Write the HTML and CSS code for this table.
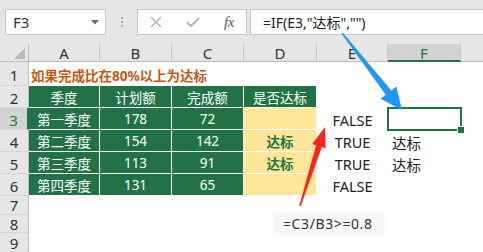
FILE: index.html
```html
<!DOCTYPE html>
<html lang="zh">
<head>
<meta charset="utf-8">
<link rel="stylesheet" href="styles.css">
</head>
<body>
<div class="app">
  <div class="fbar">
    <div class="namebox"><span>F3</span>
      <svg class="caret" width="8" height="5" viewBox="0 0 8 5"><path d="M0 0H8L4 4.5Z" fill="#6a6a6a"/></svg>
    </div>
    <div class="dots"><i></i><i></i><i></i></div>
    <div class="fxbox">
      <svg width="12" height="12" viewBox="0 0 12 12"><path d="M1 1L11 11M11 1L1 11" stroke="#b4b4b4" stroke-width="1.4" fill="none"/></svg>
      <svg width="14" height="10" viewBox="0 0 14 10"><path d="M1 5.5L5 9L13 1" stroke="#b4b4b4" stroke-width="2" fill="none"/></svg>
      <span class="fx">fx</span>
    </div>
    <div class="formula">=IF(E3,"达标","")</div>
  </div>
  <div class="sheet">
    <div class="corner"><i></i></div>
    <div class="ch">A</div><div class="ch">B</div><div class="ch">C</div><div class="ch">D</div><div class="ch">E</div><div class="ch sel">F</div><div class="ch end"></div>

    <div class="rh">1</div>
    <div class="title">如果完成比在80%以上为达标</div>

    <div class="rh">2</div>
    <div class="g">季度</div><div class="g">计划额</div><div class="g">完成额</div><div class="g">是否达标</div><div class="c"></div><div class="c"></div><div class="c"></div>

    <div class="rh sel">3</div>
    <div class="g">第一季度</div><div class="g">178</div><div class="g">72</div><div class="y"></div><div class="c e">FALSE</div><div class="c f active"></div><div class="c"></div>

    <div class="rh">4</div>
    <div class="g">第二季度</div><div class="g">154</div><div class="g">142</div><div class="y">达标</div><div class="c e">TRUE</div><div class="c f">达标</div><div class="c"></div>

    <div class="rh">5</div>
    <div class="g">第三季度</div><div class="g">113</div><div class="g">91</div><div class="y">达标</div><div class="c e">TRUE</div><div class="c f">达标</div><div class="c"></div>

    <div class="rh">6</div>
    <div class="g">第四季度</div><div class="g">131</div><div class="g">65</div><div class="y"></div><div class="c e">FALSE</div><div class="c"></div><div class="c"></div>

    <div class="rh small">7</div><div class="blank"></div>
    <div class="rh small">8</div><div class="blank"></div>
    <div class="rh small">9</div><div class="blank"></div>
  </div>
  <div class="note">=C3/B3&gt;=0.8</div>
  <svg class="arrows" width="483" height="252" viewBox="0 0 483 252">
    <polygon fill="#1d98f6" points="342.6,32.6 391.3,90.4 396.4,86.5 402,110 380.6,98.8 385.7,94.8 341.4,33.4"/>
    <polygon fill="#ff2218" points="300.7,206.2 321.8,147 325.6,148.2 325,127 312.3,144 316.1,145.2 299.3,205.8"/>
  </svg>
</div>
</body>
</html>
```

FILE: styles.css
```css
* { box-sizing: border-box; }
html, body { margin: 0; padding: 0; background: #fff; }
.app {
  position: relative;
  width: 483px;
  height: 252px;
  overflow: hidden;
  font-family: "Noto Sans", "Noto Sans CJK SC", sans-serif;
  color: #222;
}
.fbar {
  height: 44px;
  background: #e6e6e6;
  display: flex;
  align-items: flex-start;
  padding: 9px 0 0 5px;
}
.namebox {
  width: 101px;
  height: 26px;
  background: #fff;
  border: 1px solid #c6c6c6;
  display: flex;
  align-items: center;
  justify-content: space-between;
  padding: 0 6px 0 7px;
  font-size: 15px;
  color: #333;
}
.dots {
  width: 31px;
  height: 26px;
  display: flex;
  flex-direction: column;
  align-items: center;
  justify-content: center;
  gap: 2px;
}
.dots i { width: 2px; height: 2px; background: #a8a8a8; display: block; }
.fxbox {
  width: 110px;
  height: 26px;
  background: #fff;
  border: 1px solid #c6c6c6;
  display: flex;
  align-items: center;
  justify-content: space-around;
}
.fx {
  font-family: "Liberation Serif", serif;
  font-style: italic;
  font-size: 15px;
  color: #555;
  letter-spacing: -0.5px;
}
.formula {
  flex: 1;
  margin-left: 3px;
  height: 26px;
  background: #fff;
  border: 1px solid #c6c6c6;
  border-right: none;
  display: flex;
  align-items: center;
  padding-left: 12px;
  font-size: 14px;
  color: #222;
}
.sheet {
  display: grid;
  grid-template-columns: 29px 71px 72px 72px 73px 71px 73px 1fr;
  grid-template-rows: 18px 24px 22px 22px 22px 22px 22px 19px 18px 20px;
}
.corner {
  background: #e6e6e6;
  border-right: 1px solid #bdbdbd;
  border-bottom: 1px solid #bdbdbd;
  position: relative;
}
.corner i {
  position: absolute;
  right: 3px;
  bottom: 2px;
  width: 0; height: 0;
  border-left: 11px solid transparent;
  border-bottom: 11px solid #b7b7b7;
}
.ch {
  background: #e6e6e6;
  border-right: 1px solid #c8c8c8;
  border-bottom: 1px solid #bdbdbd;
  font-size: 15px;
  color: #333;
  text-align: center;
  line-height: 17px;
  padding-top: 1px;
  overflow: hidden;
}
.ch.sel {
  background: #d2d2d2;
  color: #217346;
  border-bottom: 2px solid #217346;
}
.ch.end { border-right: none; }
.rh {
  background: #e6e6e6;
  border-right: 1px solid #bdbdbd;
  border-bottom: 1px solid #d4d4d4;
  font-size: 15px;
  color: #333;
  display: flex;
  align-items: center;
  justify-content: center;
  line-height: 17px;
  padding-top: 3px;
  overflow: hidden;
}
.rh.small { padding-top: 1px; }
.rh.sel {
  background: #d2d2d2;
  color: #217346;
  border-right: 2px solid #217346;
}
.title {
  grid-column: 2 / span 7;
  font-size: 13.5px;
  font-weight: bold;
  color: #c65911;
  display: flex;
  align-items: center;
  padding: 2px 0 0 2px;
}
.g, .y {
  background: #217346;
  color: #fff;
  border-right: 1px solid #fff;
  border-bottom: 1px solid #fff;
  display: flex;
  align-items: center;
  justify-content: center;
  font-size: 13.5px;
  padding-top: 1px;
}
.y {
  background: #ffe699;
  color: #217346;
  font-weight: bold;
}
.c {
  font-size: 14.5px;
  color: #222;
  display: flex;
  align-items: center;
  padding-top: 2px;
}
.c.e { justify-content: center; }
.c.f { padding-left: 4px; }
.c.active {
  position: relative;
  outline: 2px solid #217346;
  outline-offset: -1px;
}
.c.active::after {
  content: "";
  position: absolute;
  right: -4px;
  bottom: -4px;
  width: 6px;
  height: 6px;
  background: #217346;
  border: 1px solid #fff;
}
.blank { grid-column: 2 / span 7; }
.note {
  position: absolute;
  left: 273px;
  top: 212px;
  width: 112px;
  height: 23px;
  background: #f8f8f8;
  font-size: 14px;
  color: #333;
  padding-left: 10px;
  line-height: 23px;
  letter-spacing: 0.6px;
}
.arrows {
  position: absolute;
  left: 0;
  top: 0;
  pointer-events: none;
}
```
